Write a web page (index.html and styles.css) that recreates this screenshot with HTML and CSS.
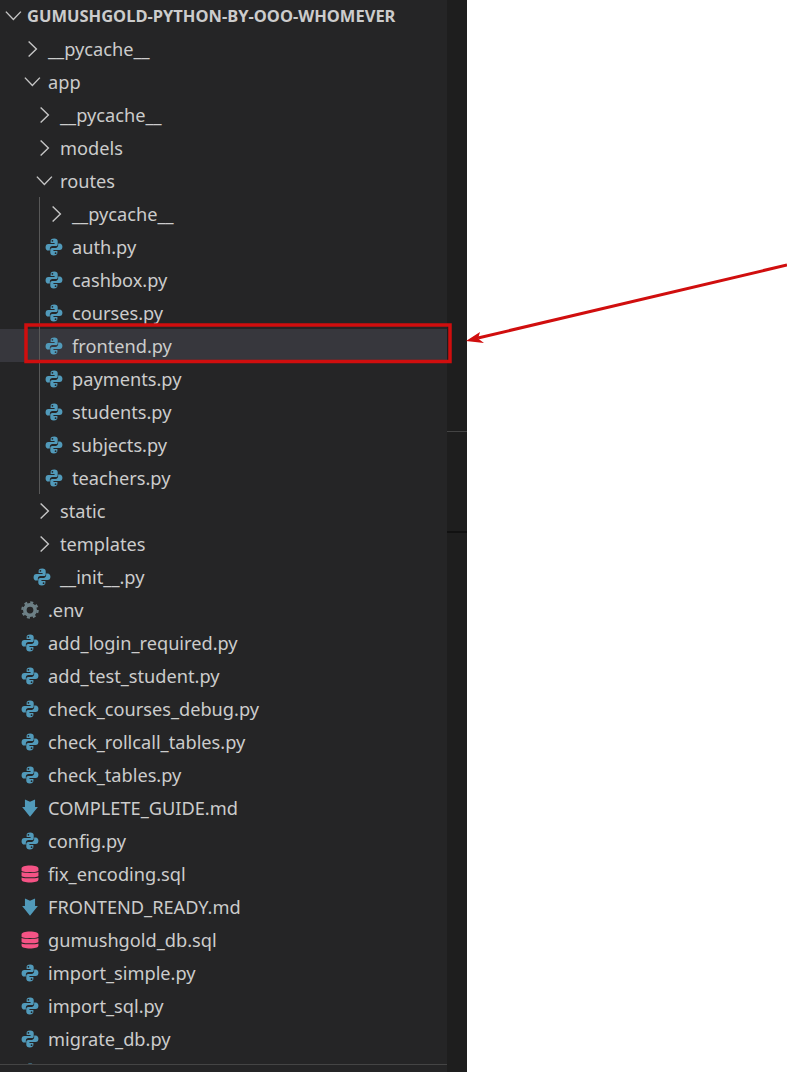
FILE: index.html
```html
<!DOCTYPE html>
<html lang="en">
<head>
<meta charset="utf-8">
<title>Explorer</title>
<link rel="stylesheet" href="styles.css">
</head>
<body>
<svg class="defs" width="0" height="0" aria-hidden="true">
  <defs>
    <symbol id="chev-r" viewBox="0 0 16 16"><path d="M4.500 2 10.700 8 4.500 14" fill="none" stroke="#c5c5c5" stroke-width="1.150"/></symbol>
    <symbol id="chev-d" viewBox="0 0 16 16"><path d="M1.500 4.500 7.500 10.800 13.500 4.500" fill="none" stroke="#c5c5c5" stroke-width="1.150"/></symbol>
    <symbol id="py" viewBox="0 0 16 16">
      <g fill="#519aba">
        <path fill-rule="evenodd" d="M8.300 .5C5.600 .5 5 1.600 5 2.800v1.700h3.500v.8H3C1.400 5.300 .5 6.400 .5 8.200S1.500 11.200 3 11.200h1.300V9.500c0-1.300 1-2.300 2.300-2.300h3c1 0 1.700-.7 1.700-1.700V2.800C11.300 1.400 10.200 .5 8.300 .5zM6.600 1.700a.8 .8 0 1 1 0 1.600.8 .8 0 0 1 0-1.600z"/>
        <path fill-rule="evenodd" transform="rotate(180 8 8)" d="M8.300 .5C5.600 .5 5 1.600 5 2.800v1.700h3.500v.8H3C1.400 5.300 .5 6.400 .5 8.200S1.500 11.200 3 11.200h1.300V9.500c0-1.300 1-2.300 2.300-2.300h3c1 0 1.700-.7 1.700-1.700V2.800C11.300 1.400 10.200 .5 8.300 .5zM6.600 1.700a.8 .8 0 1 1 0 1.600.8 .8 0 0 1 0-1.600z"/>
      </g>
    </symbol>
    <symbol id="gear" viewBox="0 0 16 16">
      <circle cx="8" cy="8" r="4.600" fill="none" stroke="#6d8086" stroke-width="3.200"/>
      <circle cx="8" cy="8" r="6.800" fill="none" stroke="#6d8086" stroke-width="2" stroke-dasharray="2.670 2.670"/>
    </symbol>
    <symbol id="md" viewBox="0 0 16 16"><path fill="#519aba" d="M3.500 .5 8 2.500 12.500 .5V7H15L8 15.800 1 7H3.500z"/></symbol>
    <symbol id="db" viewBox="0 0 16 16">
      <g fill="#f55385">
        <path d="M.5 3C.5 1.500 3.500 .5 8 .5s7.500 1 7.500 2.500v2C15.500 5.800 12 6.300 8 6.300S.5 5.800 .5 5z"/>
        <path d="M.5 6.300C2 6.800 5 7.100 8 7.100s6-.3 7.500-.8V9.700C15.500 10.400 12 10.900 8 10.900S.5 10.400 .5 9.700z"/>
        <path d="M.5 11C2 11.500 5 11.800 8 11.800s6-.3 7.500-.8V13C15.500 14.500 12 15.500 8 15.500S.5 14.500 .5 13z"/>
      </g>
    </symbol>
  </defs>
</svg>

<div class="window">
  <aside class="sidebar">
    <div class="tree">
      <div class="row head"><span class="slot-head"><svg class="chev"><use href="#chev-d"/></svg></span><span class="title">GUMUSHGOLD-PYTHON-BY-OOO-WHOMEVER</span></div>
      <div class="row d1"><span class="slot"><svg class="chev"><use href="#chev-r"/></svg></span><span>__pycache__</span></div>
      <div class="row d1"><span class="slot"><svg class="chev"><use href="#chev-d"/></svg></span><span>app</span></div>
      <div class="row d2"><span class="slot"><svg class="chev"><use href="#chev-r"/></svg></span><span>__pycache__</span></div>
      <div class="row d2"><span class="slot"><svg class="chev"><use href="#chev-r"/></svg></span><span>models</span></div>
      <div class="row d2"><span class="slot"><svg class="chev"><use href="#chev-d"/></svg></span><span>routes</span></div>
      <div class="group">
        <div class="row d3"><span class="slot"><svg class="chev"><use href="#chev-r"/></svg></span><span>__pycache__</span></div>
        <div class="row d3"><span class="slot"><svg class="icon"><use href="#py"/></svg></span><span>auth.py</span></div>
        <div class="row d3"><span class="slot"><svg class="icon"><use href="#py"/></svg></span><span>cashbox.py</span></div>
        <div class="row d3"><span class="slot"><svg class="icon"><use href="#py"/></svg></span><span>courses.py</span></div>
        <div class="row d3 selected"><span class="slot"><svg class="icon"><use href="#py"/></svg></span><span>frontend.py</span></div>
        <div class="row d3"><span class="slot"><svg class="icon"><use href="#py"/></svg></span><span>payments.py</span></div>
        <div class="row d3"><span class="slot"><svg class="icon"><use href="#py"/></svg></span><span>students.py</span></div>
        <div class="row d3"><span class="slot"><svg class="icon"><use href="#py"/></svg></span><span>subjects.py</span></div>
        <div class="row d3"><span class="slot"><svg class="icon"><use href="#py"/></svg></span><span>teachers.py</span></div>
      </div>
      <div class="row d2"><span class="slot"><svg class="chev"><use href="#chev-r"/></svg></span><span>static</span></div>
      <div class="row d2"><span class="slot"><svg class="chev"><use href="#chev-r"/></svg></span><span>templates</span></div>
      <div class="row d2"><span class="slot"><svg class="icon"><use href="#py"/></svg></span><span>__init__.py</span></div>
      <div class="row d1"><span class="slot"><svg class="icon"><use href="#gear"/></svg></span><span>.env</span></div>
      <div class="row d1"><span class="slot"><svg class="icon"><use href="#py"/></svg></span><span>add_login_required.py</span></div>
      <div class="row d1"><span class="slot"><svg class="icon"><use href="#py"/></svg></span><span>add_test_student.py</span></div>
      <div class="row d1"><span class="slot"><svg class="icon"><use href="#py"/></svg></span><span>check_courses_debug.py</span></div>
      <div class="row d1"><span class="slot"><svg class="icon"><use href="#py"/></svg></span><span>check_rollcall_tables.py</span></div>
      <div class="row d1"><span class="slot"><svg class="icon"><use href="#py"/></svg></span><span>check_tables.py</span></div>
      <div class="row d1"><span class="slot"><svg class="icon"><use href="#md"/></svg></span><span>COMPLETE_GUIDE.md</span></div>
      <div class="row d1"><span class="slot"><svg class="icon"><use href="#py"/></svg></span><span>config.py</span></div>
      <div class="row d1"><span class="slot"><svg class="icon"><use href="#db"/></svg></span><span>fix_encoding.sql</span></div>
      <div class="row d1"><span class="slot"><svg class="icon"><use href="#md"/></svg></span><span>FRONTEND_READY.md</span></div>
      <div class="row d1"><span class="slot"><svg class="icon"><use href="#db"/></svg></span><span>gumushgold_db.sql</span></div>
      <div class="row d1"><span class="slot"><svg class="icon"><use href="#py"/></svg></span><span>import_simple.py</span></div>
      <div class="row d1"><span class="slot"><svg class="icon"><use href="#py"/></svg></span><span>import_sql.py</span></div>
      <div class="row d1"><span class="slot"><svg class="icon"><use href="#py"/></svg></span><span>migrate_db.py</span></div>
      <div class="row d1"><span class="slot"><svg class="icon"><use href="#py"/></svg></span></div>
    </div>
    <div class="panel-foot"></div>
  </aside>
  <main class="editor">
    <div class="ed-top"></div>
    <div class="ed-mid"></div>
    <div class="ed-low"></div>
  </main>
  <div class="blank"></div>
  <svg class="annotation" viewBox="0 0 787 1072" aria-hidden="true">
    <rect x="26" y="325" width="424" height="36.500" fill="none" stroke="#d00e0e" stroke-width="3.500"/>
    <path d="M787 265 478 338" fill="none" stroke="#d00e0e" stroke-width="3"/>
    <path d="M466 341 480 332 478 338.500 484 343z" fill="#d00e0e"/>
  </svg>
</div>
</body>
</html>
```
FILE: styles.css
```css
html, body {
  margin: 0;
  padding: 0;
  background: #ffffff;
}
.defs {
  position: absolute;
}
.window {
  position: relative;
  display: flex;
  width: 787px;
  height: 1072px;
  overflow: hidden;
  font-family: "Noto Sans", "Open Sans", sans-serif;
  font-size: 18.2px;
  color: #cccccc;
}
.sidebar {
  width: 447px;
  height: 1072px;
  background: #252526;
  display: flex;
  flex-direction: column;
}
.tree {
  height: 1064px;
  overflow: hidden;
}
.tree > .row:first-child {
  margin-top: -1px;
}
.panel-foot {
  height: 7px;
  border-top: 1px solid #454545;
}
.row {
  display: flex;
  align-items: center;
  height: 33px;
  white-space: nowrap;
}
.head {
  font-weight: 700;
  font-size: 16.5px;
}
.slot-head {
  display: flex;
  align-items: center;
  width: 27px;
  padding-left: 4px;
  box-sizing: border-box;
}
.slot {
  display: flex;
  align-items: center;
  width: 28px;
  flex: none;
}
.d1 { padding-left: 20px; }
.d2 { padding-left: 32px; }
.d3 { padding-left: 44px; }
.chev {
  width: 20px;
  height: 20px;
  margin-left: 3px;
}
.slot-head .chev {
  margin-left: 0;
}
.icon {
  width: 18px;
  height: 18px;
  margin-left: 1px;
}
.group {
  position: relative;
}
.group::before {
  content: "";
  position: absolute;
  left: 39px;
  top: 0;
  bottom: 0;
  width: 1px;
  background: #585858;
}
.selected {
  background: #37373d;
}
.editor {
  width: 20px;
  height: 1072px;
  background: #1e1e1e;
  display: flex;
  flex-direction: column;
}
.ed-top {
  height: 431px;
  border-bottom: 1px solid #444444;
}
.ed-mid {
  height: 99px;
  border-bottom: 2px solid #111111;
}
.ed-low {
  flex: 1;
}
.blank {
  flex: 1;
  background: #ffffff;
}
.annotation {
  position: absolute;
  left: 0;
  top: 0;
  width: 787px;
  height: 1072px;
  pointer-events: none;
}
```
